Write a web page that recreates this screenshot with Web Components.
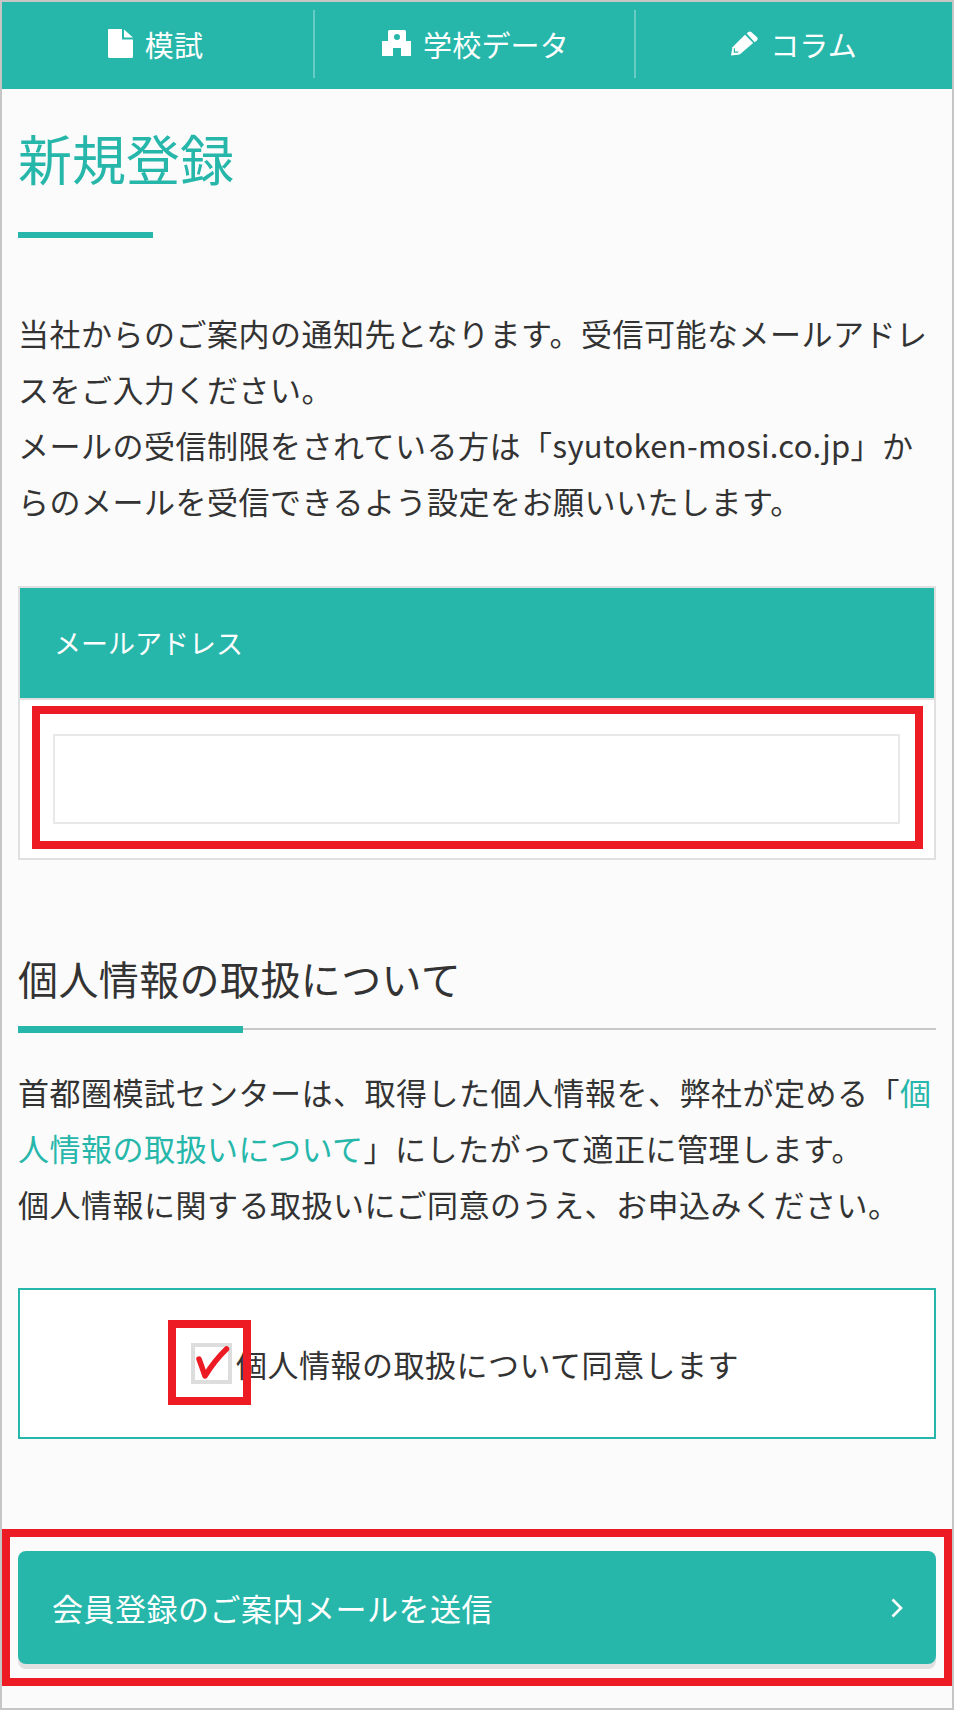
<!DOCTYPE html>
<html lang="ja">
<head>
<meta charset="utf-8">
<title>新規登録</title>
<style>
  html, body { margin: 0; padding: 0; }
  body {
    font-family: "Noto Sans CJK JP", "Noto Sans", sans-serif;
    color: #333;
  }
</style>
</head>
<body>
<page-frame>
  <site-nav>
    <nav-item icon="file" style="padding-right: 4px">模試</nav-item>
    <nav-item icon="school" style="padding-left: 2px">学校データ</nav-item>
    <nav-item icon="pencil">コラム</nav-item>
  </site-nav>
  <page-title>新規登録</page-title>
  <text-block style="--top: 67px">当社からのご案内の通知先となります。受信可能なメールアドレスをご入力ください。<br>メールの受信制限をされている方は「<span style="letter-spacing:0.3px">syutoken-mosi.co.jp</span>」からのメールを受信できるよう設定をお願いいたします。</text-block>
  <email-form label="メールアドレス"></email-form>
  <section-heading>個人情報の取扱について</section-heading>
  <text-block style="--top: 34px">首都圏模試センターは、取得した個人情報を、弊社が定める「<a href="#" style="color:#26b7aa;text-decoration:none">個人情報の取扱いについて</a>」にしたがって適正に管理します。<br>個人情報に関する取扱いにご同意のうえ、お申込みください。</text-block>
  <agree-box>個人情報の取扱について同意します</agree-box>
  <submit-button>会員登録のご案内メールを送信</submit-button>
</page-frame>

<script>
const TEAL = "#26b7aa";
const RED = "#ed1c24";

class PageFrame extends HTMLElement {
  constructor() {
    super();
    this.attachShadow({ mode: "open" }).innerHTML = `
      <style>
        :host {
          display: block;
          box-sizing: border-box;
          width: 954px;
          height: 1710px;
          border: 2px solid #c6c6c6;
          background: #fbfbfb;
          overflow: hidden;
        }
      </style>
      <slot></slot>`;
  }
}

class SiteNav extends HTMLElement {
  constructor() {
    super();
    this.attachShadow({ mode: "open" }).innerHTML = `
      <style>
        :host {
          display: grid;
          grid-template-columns: 313px 321px 1fr;
          height: 87px;
          box-sizing: border-box;
          padding: 8px 0 11px;
          background: ${TEAL};
        }
      </style>
      <slot></slot>`;
  }
}

const NAV_ICONS = {
  file: `<svg width="25" height="29" viewBox="0 0 25 29"><path fill="#fff" d="M1 0H14V10.5H25V27.5Q25 29 23.500 29H1.500Q0 29 0 27.500V1Q0 0 1 0ZM16 0.500L25 8.500H16Z"/></svg>`,
  school: `<svg width="29" height="26" viewBox="0 0 29 26"><path fill="#fff" fill-rule="evenodd" d="M6 1.500Q6 0 7.500 0H22.500Q24 0 24 1.500V11H29V26H19V18H11V26H0V11H6ZM15 4A3 3 0 1 0 15 10A3 3 0 1 0 15 4Z"/></svg>`,
  pencil: `<svg width="27" height="25" viewBox="0 0 28 25"><path fill="#fff" d="M16.300 2L18 0.500Q19.500 -0.500 21 0.500L27 6Q28.300 7.500 27 9L24.500 11.200Z"/><path fill="#fff" d="M14.500 3.500L23 12L9 24L0 25L1.500 16.500Z"/><path fill="none" stroke="${TEAL}" stroke-width="1.200" d="M3.500 17.500V21.500H7.500"/></svg>`,
};

class NavItem extends HTMLElement {
  constructor() {
    super();
    this.attachShadow({ mode: "open" }).innerHTML = `
      <style>
        :host {
          display: flex;
          align-items: center;
          justify-content: center;
          gap: 12px;
          font-size: 29px;
          line-height: 1;
          letter-spacing: 0.2px;
          color: #fff;
          border-right: 2px solid rgba(255, 255, 255, 0.3);
        }
        :host(:last-child) { border-right: 0; }
        .icon { display: flex; margin-top: -2px; }
      </style>
      <span class="icon"></span><slot></slot>`;
  }

  connectedCallback() {
    this.shadowRoot.querySelector(".icon").innerHTML =
      NAV_ICONS[this.getAttribute("icon")] || "";
  }
}

class PageTitle extends HTMLElement {
  constructor() {
    super();
    this.attachShadow({ mode: "open" }).innerHTML = `
      <style>
        :host {
          display: block;
          padding: 30px 16px 0;
          font-size: 54px;
          line-height: 78px;
          color: ${TEAL};
        }
        .rule {
          width: 135px;
          height: 6px;
          margin-top: 35px;
          background: ${TEAL};
        }
      </style>
      <div><slot></slot></div>
      <div class="rule"></div>`;
  }
}

class TextBlock extends HTMLElement {
  constructor() {
    super();
    this.attachShadow({ mode: "open" }).innerHTML = `
      <style>
        :host {
          display: block;
          margin-top: var(--top, 0);
          padding: 0 16px;
          font-size: 31px;
          line-height: 56px;
          letter-spacing: 0.5px;
          color: #333;
        }
      </style>
      <slot></slot>`;
  }
}

class EmailForm extends HTMLElement {
  constructor() {
    super();
    this.attachShadow({ mode: "open" }).innerHTML = `
      <style>
        :host {
          display: block;
          box-sizing: border-box;
          margin: 57px 16px 0;
          height: 274px;
          border: 2px solid #e0e0e0;
          background: #fff;
        }
        .head {
          box-sizing: border-box;
          height: 112px;
          padding: 0 34px 2px;
          display: flex;
          align-items: center;
          border-bottom: 2px solid #e0e0e0;
          background: ${TEAL};
          color: #fff;
          font-size: 27px;
        }
        .mark {
          box-sizing: border-box;
          height: 143px;
          margin: 6px 11px 0 12px;
          padding: 20px 15px 17px 13px;
          border: 8px solid ${RED};
        }
        input {
          display: block;
          box-sizing: border-box;
          width: 100%;
          height: 90px;
          border: 2px solid #e8e8e8;
          background: #fff;
          outline: 0;
        }
      </style>
      <div class="head"></div>
      <div class="mark"><input type="email" aria-label="email"></div>`;
  }

  connectedCallback() {
    this.shadowRoot.querySelector(".head").textContent = this.getAttribute("label");
  }
}

class SectionHeading extends HTMLElement {
  constructor() {
    super();
    this.attachShadow({ mode: "open" }).innerHTML = `
      <style>
        :host {
          display: block;
          margin: 86px 16px 0;
          font-size: 40px;
          line-height: 64px;
          letter-spacing: 0.4px;
          color: #333;
        }
        .rule {
          position: relative;
          height: 2px;
          margin-top: 18px;
          background: #c8c8c8;
        }
        .rule::before {
          content: "";
          position: absolute;
          left: 0;
          top: -2px;
          width: 225px;
          height: 7px;
          background: ${TEAL};
        }
      </style>
      <div><slot></slot></div>
      <div class="rule"></div>`;
  }
}

class AgreeBox extends HTMLElement {
  constructor() {
    super();
    this.attachShadow({ mode: "open" }).innerHTML = `
      <style>
        :host {
          display: flex;
          position: relative;
          box-sizing: border-box;
          align-items: center;
          justify-content: center;
          gap: 4px;
          height: 151px;
          margin: 56px 16px 0;
          padding-right: 24px;
          border: 2px solid ${TEAL};
          background: #fff;
          font-size: 31px;
          letter-spacing: 0.5px;
          color: #333;
        }
        .check {
          display: block;
          box-sizing: border-box;
          width: 41px;
          height: 41px;
          border: 4px solid #ddd;
          background: #fff;
        }
        .mark {
          position: absolute;
          left: 148px;
          top: 30px;
          box-sizing: border-box;
          width: 83px;
          height: 85px;
          border: 8px solid ${RED};
        }
        svg { position: absolute; left: 15px; top: 13px; overflow: visible; }
      </style>
      <span class="check"></span><span><slot></slot></span>
      <div class="mark">
        <svg width="40" height="38" viewBox="0 0 40 38"><path d="M8 18Q11 26 14 35Q24 19 35.500 8" fill="none" stroke="${RED}" stroke-width="5.500" stroke-linecap="round" stroke-linejoin="round"/></svg>
      </div>`;
  }
}

class SubmitButton extends HTMLElement {
  constructor() {
    super();
    this.attachShadow({ mode: "open" }).innerHTML = `
      <style>
        :host {
          display: block;
          box-sizing: border-box;
          height: 157px;
          margin-top: 90px;
          padding: 14px 8px 0;
          border: 8px solid ${RED};
        }
        .btn {
          display: flex;
          align-items: center;
          justify-content: space-between;
          box-sizing: border-box;
          height: 113px;
          padding: 0 33px 0 34px;
          border-radius: 8px;
          background: ${TEAL};
          box-shadow: 0 5px 0 #e0e0e0;
          color: #fff;
          font-size: 31px;
          letter-spacing: 0.5px;
        }
        svg { display: block; }
      </style>
      <div class="btn">
        <span><slot></slot></span>
        <svg width="12" height="20" viewBox="0 0 12 20"><path d="M1.500 1.500L10 10L1.500 18.500" fill="none" stroke="#fff" stroke-width="2.600"/></svg>
      </div>`;
  }
}

customElements.define("page-frame", PageFrame);
customElements.define("site-nav", SiteNav);
customElements.define("nav-item", NavItem);
customElements.define("page-title", PageTitle);
customElements.define("text-block", TextBlock);
customElements.define("email-form", EmailForm);
customElements.define("section-heading", SectionHeading);
customElements.define("agree-box", AgreeBox);
customElements.define("submit-button", SubmitButton);
</script>
</body>
</html>
